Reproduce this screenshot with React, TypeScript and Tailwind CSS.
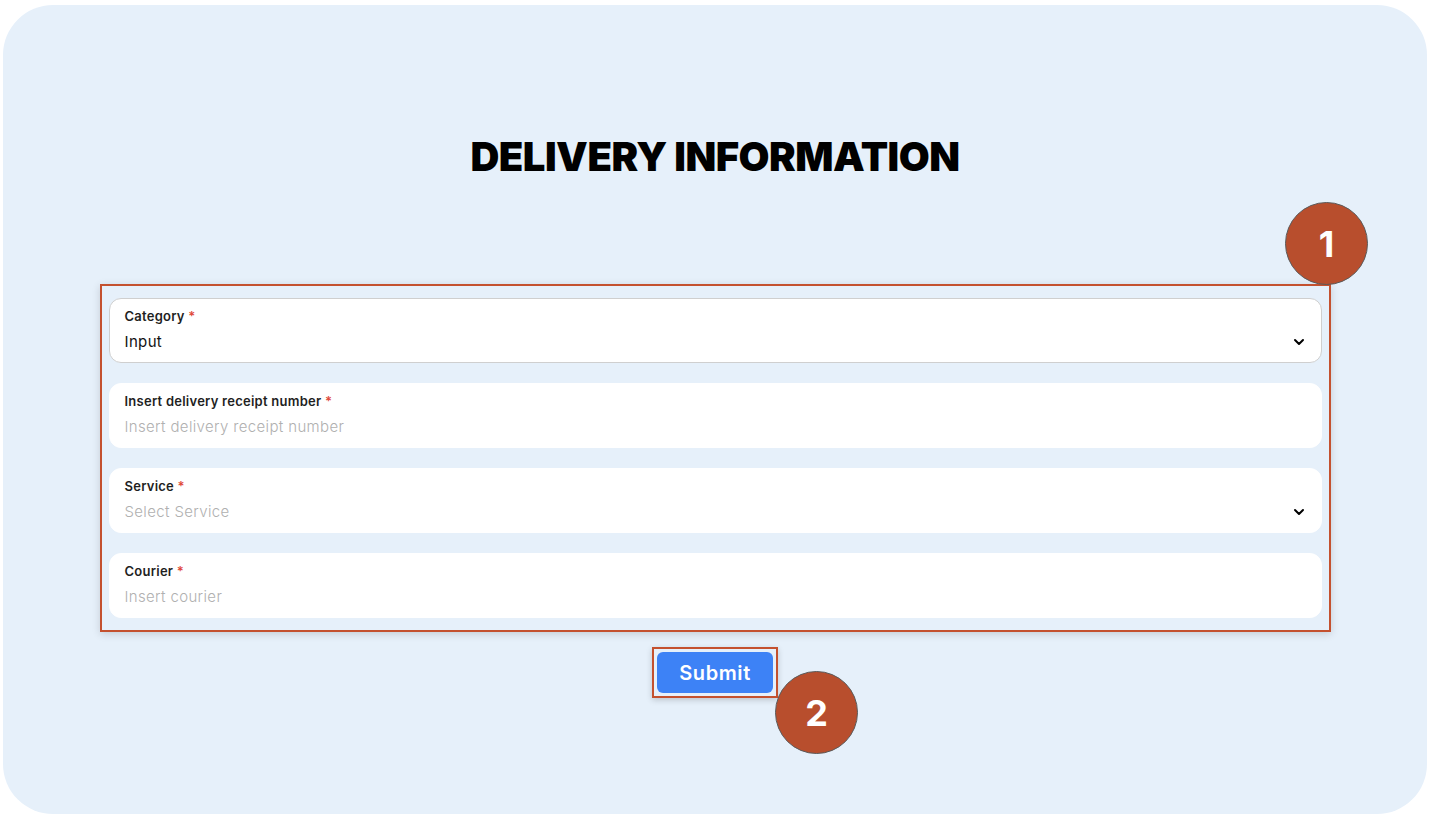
import { ChevronDown } from 'lucide-react'

interface Field {
  label: string
  value?: string
  placeholder?: string
  select?: boolean
  outlined?: boolean
}

const fields: Field[] = [
  { label: 'Category', value: 'Input', select: true, outlined: true },
  { label: 'Insert delivery receipt number', placeholder: 'Insert delivery receipt number' },
  { label: 'Service', placeholder: 'Select Service', select: true },
  { label: 'Courier', placeholder: 'Insert courier' },
]

function FormField({ field }: { field: Field }) {
  return (
    <div
      className={
        'flex h-[65px] items-start rounded-[12px] bg-white pl-[15px] pr-[14px] pt-[8px] ' +
        (field.outlined ? 'border border-[#cfcfcf]' : 'border border-white')
      }
    >
      <div className="flex flex-1 flex-col">
        <div className="text-[13px] font-semibold leading-[18px] tracking-[0.25px] text-[#1f1f1f]">
          {field.label} <span className="text-[#e0483a]">*</span>
        </div>
        <div
          className={
            'mt-[8px] text-[15px] leading-[18px] tracking-[0.35px] ' +
            (field.value ? 'text-[#111]' : 'font-light text-[#b0b0b0]')
          }
        >
          {field.value ?? field.placeholder}
        </div>
      </div>
      {field.select && <ChevronDown className="mt-[27px] h-[16px] w-[16px] text-black" strokeWidth={3} />}
    </div>
  )
}

function Marker({ n, className }: { n: string; className: string }) {
  return (
    <div
      className={
        'absolute flex h-[83px] w-[83px] items-center justify-center rounded-full border border-[#5a5a5a] bg-[#b84e2d] text-[36px] font-bold text-white ' +
        className
      }
    >
      {n}
    </div>
  )
}

export default function App() {
  return (
    <div className="h-[819px] w-[1431px] bg-white pb-[5px] pl-[3px] pr-[4px] pt-[5px] font-['Inter',sans-serif]">
      <div className="relative flex h-full flex-col items-center rounded-[50px] bg-[#e6f0fa]">
        <h1 className="mt-[132px] text-[40px] font-black leading-[40px] tracking-[-0.5px] text-black">
          DELIVERY INFORMATION
        </h1>

        <div className="mt-[107px] w-[1231px] border-2 border-[#c4512f] px-[7px] pb-[12px] pt-[12px] shadow-[0_2px_8px_rgba(0,0,0,0.15)]">
          <div className="flex flex-col gap-[20px]">
            {fields.map((f) => (
              <FormField key={f.label} field={f} />
            ))}
          </div>
        </div>

        <div className="mt-[15px] border-2 border-[#c4512f] p-[3px] shadow-[0_2px_6px_rgba(0,0,0,0.18)]">
          <button className="h-[41px] w-[116px] rounded-[6px] bg-[#3d82f6] text-[20px] font-semibold tracking-[0.6px] text-white">
            Submit
          </button>
        </div>

        <Marker n="1" className="left-[1282px] top-[197px]" />
        <Marker n="2" className="left-[772px] top-[666px]" />
      </div>
    </div>
  )
}
